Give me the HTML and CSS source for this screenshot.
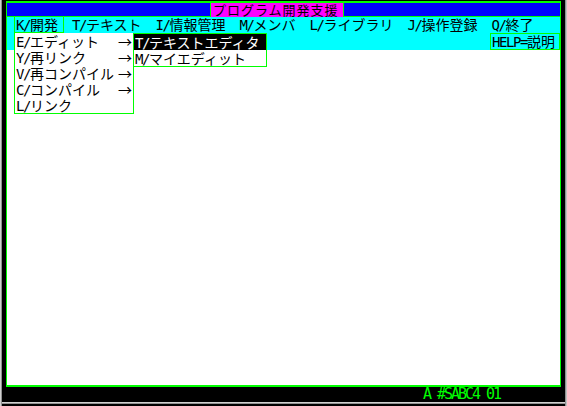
FILE: index.html
```html
<!DOCTYPE html>
<html lang="ja">
<head>
<meta charset="utf-8">
<title>プログラム開発支援</title>
<link rel="stylesheet" href="styles.css">
</head>
<body>
<div class="win">
  <div class="screen">
    <div class="titlebar"><div class="title">プログラム開発支援</div></div>
    <div class="menubar">
      <div class="row1">
        <span class="item sel"><span class="h">K/</span>開発</span>
        <span class="item"><span class="h">T/</span>テキスト</span>
        <span class="item"><span class="h">I/</span>情報管理</span>
        <span class="item"><span class="h">M/</span>メンバ</span>
        <span class="item"><span class="h">L/</span>ライブラリ</span>
        <span class="item"><span class="h">J/</span>操作登録</span>
        <span class="item"><span class="h">Q/</span>終了</span>
      </div>
      <div class="row2"><span class="help"><span class="h">HELP=</span>説明</span></div>
      <div class="dropdown">
        <div class="dd-row"><span><span class="h">E/</span>エディット</span><span class="arr">→</span></div>
        <div class="dd-row"><span><span class="h">Y/</span>再リンク</span><span class="arr">→</span></div>
        <div class="dd-row"><span><span class="h">V/</span>再コンパイル</span><span class="arr">→</span></div>
        <div class="dd-row"><span><span class="h">C/</span>コンパイル</span><span class="arr">→</span></div>
        <div class="dd-row"><span><span class="h">L/</span>リンク</span></div>
      </div>
      <div class="submenu">
        <div class="sm-row active"><span class="h">T/</span>テキストエディタ</div>
        <div class="sm-row"><span class="h">M/</span>マイエディット</div>
      </div>
    </div>
    <div class="content"></div>
  </div>
  <div class="status">A #SABC4 01</div>
</div>
</body>
</html>
```
FILE: styles.css
```css
* { box-sizing: border-box; }
html, body { margin: 0; padding: 0; }
body {
  width: 567px;
  height: 406px;
  overflow: hidden;
  background: #000;
  font-family: "Noto Sans CJK JP", sans-serif;
  font-size: 14px;
  color: #000;
}
.h {
  font-family: "DejaVu Sans Mono", monospace;
  letter-spacing: -1.43px;
}
.win {
  width: 567px;
  height: 406px;
  background: #000;
  padding: 1px 6px 4px 6px;
  display: flex;
  flex-direction: column;
  box-shadow:
    inset 1px 0 0 #d0d0d0,
    inset 2px 0 0 #909090,
    inset -1px 0 0 #c0c0c0,
    inset -2px 0 0 #909090,
    inset 0 -2px 0 #000,
    inset 0 -3px 0 #909090,
    inset 0 -4px 0 #d0d0d0;
}
.screen {
  width: 555px;
  height: 386px;
  flex: none;
  border-left: 1px solid #00ff00;
  border-right: 1px solid #00ff00;
  border-top: 2px solid #00ff00;
  border-bottom: 2px solid #00ff00;
  background: #fff;
  display: flex;
  flex-direction: column;
}
.titlebar {
  height: 14px;
  flex: none;
  background: #0000ff;
  border-bottom: 1px solid #00ff00;
  display: flex;
  padding-left: 203px;
}
.title {
  width: 134px;
  height: 14px;
  background: #ff00ff;
  border-left: 1px solid #00ff00;
  border-right: 1px solid #00ff00;
  padding-left: 2px;
  font-size: 13px;
  letter-spacing: 1px;
  line-height: 14px;
  white-space: nowrap;
  position: relative;
  z-index: 1;
}
.menubar {
  height: 33px;
  flex: none;
  background: #00ffff;
  position: relative;
}
.row1 {
  height: 16px;
  display: flex;
  align-items: flex-start;
  gap: 14px;
  padding-left: 7px;
  line-height: 15px;
  white-space: nowrap;
}
.sel {
  margin-top: -1px;
  height: 17px;
  border: 1px solid #00ff00;
  padding: 0 5px 0 1px;
  margin-right: -6px;
}
.row2 {
  height: 17px;
  display: flex;
  justify-content: flex-end;
}
.help {
  width: 70px;
  height: 17px;
  border: 1px solid #00ff00;
  padding-left: 1px;
  line-height: 15px;
  white-space: nowrap;
}
.dropdown {
  position: absolute;
  left: 7px;
  top: 16px;
  width: 120px;
  background: #fff;
  border: 1px solid #00ff00;
  border-top: none;
}
.dd-row {
  height: 16px;
  line-height: 16px;
  display: flex;
  justify-content: space-between;
  padding: 0 1px 0 1px;
  white-space: nowrap;
}
.arr { width: 14px; text-align: right; }
.submenu {
  position: absolute;
  left: 126px;
  top: 16px;
  width: 134px;
  background: #fff;
  border: 1px solid #00ff00;
}
.sm-row {
  height: 16px;
  line-height: 16px;
  padding-left: 1px;
  white-space: nowrap;
}
.sm-row.active {
  background: #000;
  color: #fff;
}
.content {
  flex: 1;
  background: #fff;
}
.status {
  height: 15px;
  flex: none;
  padding-left: 417px;
  color: #00ff00;
  font-family: "DejaVu Sans Mono", monospace;
  font-size: 15px;
  letter-spacing: -2.03px;
  line-height: 14px;
  white-space: pre;
}
```
